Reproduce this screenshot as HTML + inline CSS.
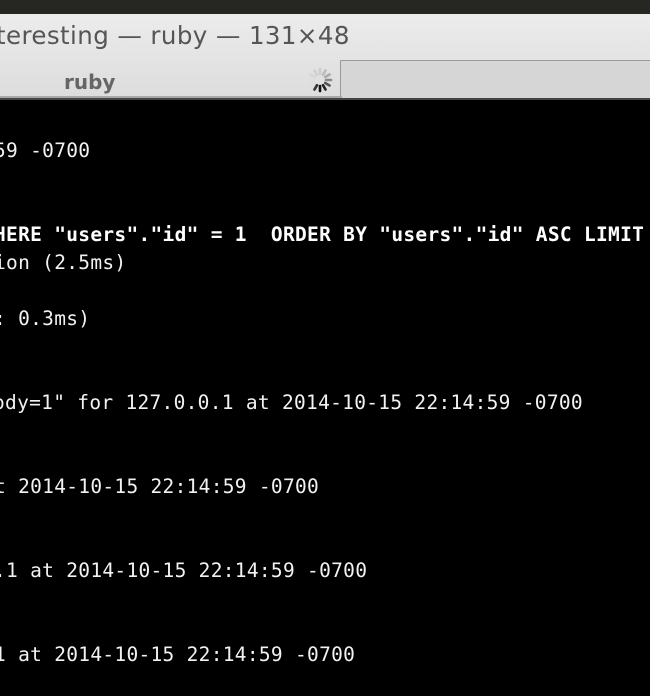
<html><head><style>
body{margin:0;width:650px;height:696px;background:#000;overflow:hidden;position:relative;font-family:"DejaVu Sans Mono","Liberation Mono",monospace}
.top{position:absolute;left:0;top:0;width:650px;height:14px;background:#262622}
.title{position:absolute;left:0;top:14px;width:650px;height:86px;background:linear-gradient(#ececec,#dcdcdc)}
.tt{position:absolute;left:-4px;top:21px;font:24.5px "DejaVu Sans","Liberation Sans",sans-serif;color:#555;letter-spacing:0.4px}
.tabr{position:absolute;left:340px;top:60px;width:310px;height:37px;background:#d6d6d6;border-top:1px solid #9a9a9a;border-left:1px solid #9a9a9a;border-bottom-left-radius:3px}
.tabs{position:absolute;left:0;top:96px;width:342px;height:2px;background:#a8a8a8}
.bot{position:absolute;left:0;top:98px;width:650px;height:2px;background:#444}
.tn{position:absolute;left:64px;top:70px;font:bold 20px "DejaVu Sans","Liberation Sans",sans-serif;color:#666}
.l{position:absolute;color:#f2f2f2;font-size:19.5px;white-space:pre;line-height:28px;letter-spacing:0.3px}
b{font-weight:bold;color:#fff}
</style></head><body>
<div class="top"></div><div class="title"></div>
<div class="tt">teresting — ruby — 131×48</div>
<div class="tabr"></div><div class="tabs"></div><div class="bot"></div>
<div class="tn">ruby</div>
<svg style="position:absolute;left:300px;top:60px" width="40" height="40" viewBox="-20 -20 40 40">
<g stroke-width="2.6" stroke-linecap="round">
<line x1="0" y1="-6" x2="0" y2="-11" stroke="#ccc" transform="rotate(0)"/>
<line x1="0" y1="-6" x2="0" y2="-11" stroke="#bbb" transform="rotate(30)"/>
<line x1="0" y1="-6" x2="0" y2="-11" stroke="#aaa" transform="rotate(60)"/>
<line x1="0" y1="-6" x2="0" y2="-11" stroke="#888" transform="rotate(90)"/>
<line x1="0" y1="-6" x2="0" y2="-11" stroke="#555" transform="rotate(120)"/>
<line x1="0" y1="-6" x2="0" y2="-11" stroke="#222" transform="rotate(150)"/>
<line x1="0" y1="-6" x2="0" y2="-11" stroke="#111" transform="rotate(180)"/>
<line x1="0" y1="-6" x2="0" y2="-11" stroke="#333" transform="rotate(210)"/>
<line x1="0" y1="-6" x2="0" y2="-11" stroke="#ddd" transform="rotate(240)"/>
<line x1="0" y1="-6" x2="0" y2="-11" stroke="#ddd" transform="rotate(270)"/>
<line x1="0" y1="-6" x2="0" y2="-11" stroke="#d5d5d5" transform="rotate(300)"/>
<line x1="0" y1="-6" x2="0" y2="-11" stroke="#d0d0d0" transform="rotate(330)"/>
</g></svg>
<div class="l" style="left:-6px;top:137px">59 -0700</div>
<div class="l" style="left:-6px;top:221px"><b>HERE "users"."id" = 1  ORDER BY "users"."id" ASC LIMIT 1</b></div>
<div class="l" style="left:-6px;top:249px">ion (2.5ms)</div>
<div class="l" style="left:-6px;top:305px">: 0.3ms)</div>
<div class="l" style="left:-7px;top:389px">ody=1" for 127.0.0.1 at 2014-10-15 22:14:59 -0700</div>
<div class="l" style="left:-6px;top:473px">t 2014-10-15 22:14:59 -0700</div>
<div class="l" style="left:-6px;top:557px">.1 at 2014-10-15 22:14:59 -0700</div>
<div class="l" style="left:-6px;top:641px">1 at 2014-10-15 22:14:59 -0700</div>
</body></html>
